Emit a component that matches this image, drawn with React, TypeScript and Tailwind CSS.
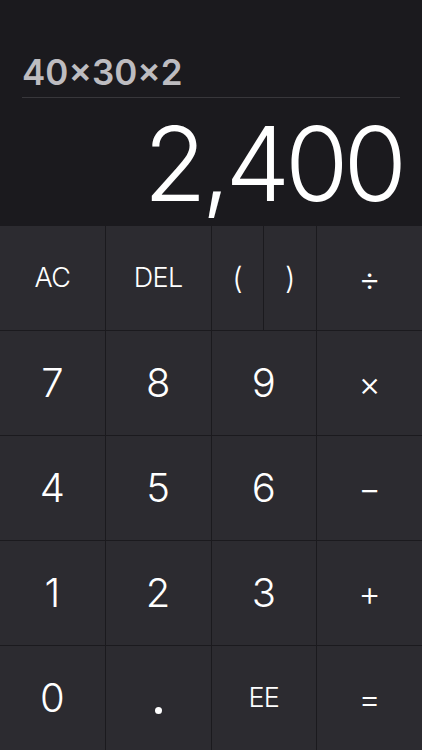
import React from 'react';

const rows: string[][] = [
    ['AC', 'DEL', '()', '÷'],
    ['7', '8', '9', '×'],
    ['4', '5', '6', '−'],
    ['1', '2', '3', '+'],
    ['0', '.', 'EE', '='],
];

function Key({ label }: { label: string }) {
    if (label === '()') {
        return (
            <div className="flex bg-[#2c2b30]">
                <div className="flex-1 flex items-center justify-center text-[30px] font-light text-white">(</div>
                <div className="w-px bg-[#1b1a1e]" />
                <div className="flex-1 flex items-center justify-center text-[30px] font-light text-white">)</div>
            </div>
        );
    }
    const small = label.length > 1;
    const op = ['÷', '×', '−', '+', '='].includes(label);
    return (
        <div
            className={
                'flex items-center justify-center bg-[#2c2b30] text-white font-light ' +
                (small ? 'text-[27px] tracking-tight' : op ? 'text-[34px]' : 'text-[40px]')
            }
        >
            {label === '.' ? <span className="w-[7px] h-[7px] rounded-full bg-white mt-[24px]" /> : label}
        </div>
    );
}

export default function App() {
    return (
        <div className="w-[422px] h-[750px] flex flex-col bg-[#1b1a1e] overflow-hidden" style={{ fontFamily: 'Inter, "Liberation Sans", sans-serif' }}>
            <div className="h-[226px] px-[22px] pt-[52px] flex flex-col">
                <div className="text-[35px] font-semibold leading-[40px] text-[#bdbcc0]">40×30×2</div>
                <div className="h-px bg-[#38373b] mt-[5px]" />
                <div className="text-right text-[103px] font-light text-white leading-none mt-[14px] -mr-[2px] tracking-tighter">2,400</div>
            </div>
            <div className="flex-1 grid grid-cols-4 grid-rows-5 gap-px">
                {rows.flat().map((l, i) => (
                    <Key key={i} label={l} />
                ))}
            </div>
        </div>
    );
}
